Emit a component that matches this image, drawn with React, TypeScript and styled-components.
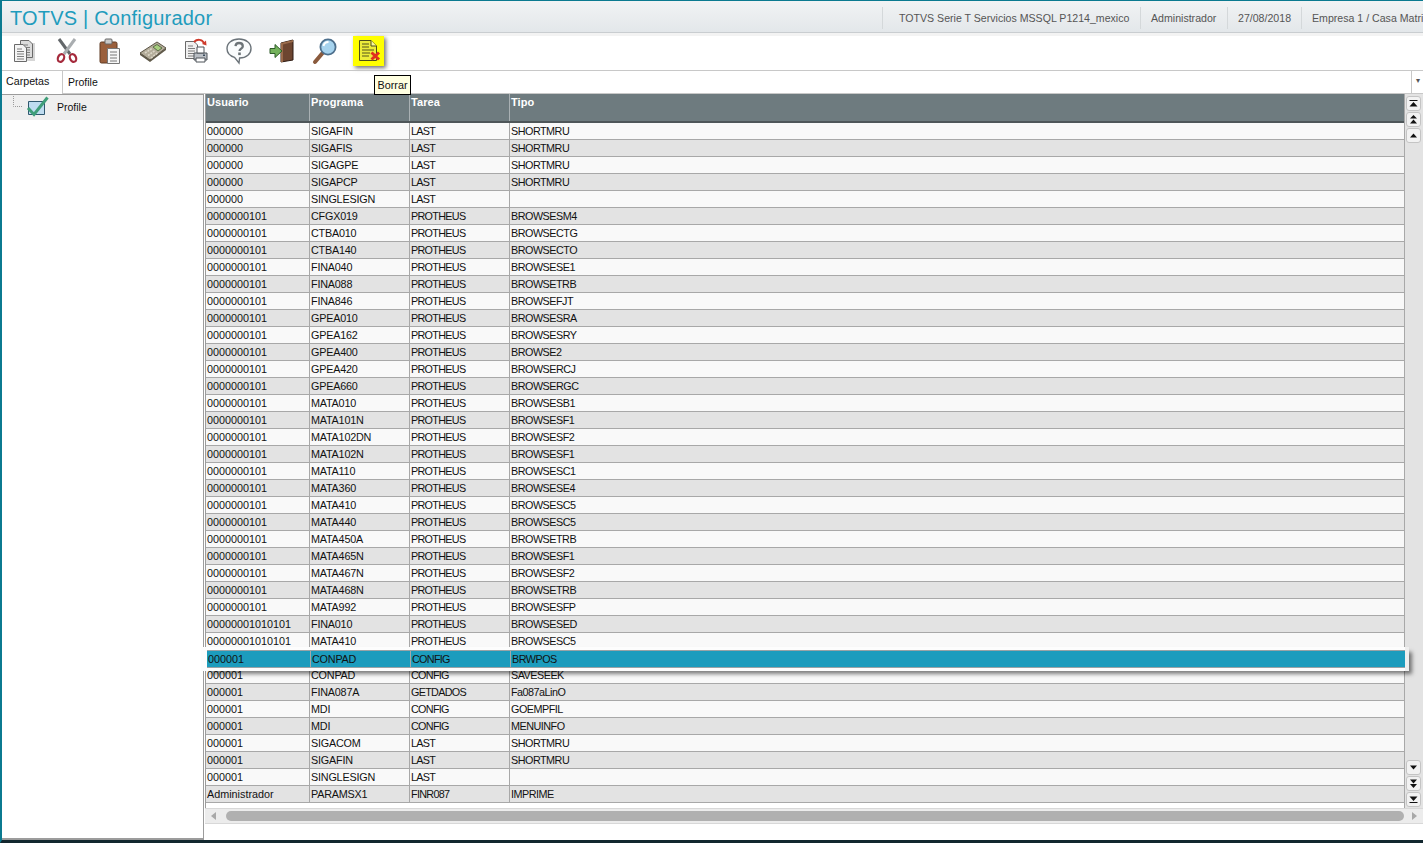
import React from 'react';
import styled, { createGlobalStyle } from 'styled-components';

const GlobalStyle = createGlobalStyle`
  html, body {
    margin: 0;
    padding: 0;
    background: #fff;
    overflow: hidden;
  }
  * {
    box-sizing: border-box;
  }
`;

const Page = styled.div`
  position: relative;
  width: 1423px;
  height: 843px;
  display: flex;
  flex-direction: column;
  overflow: hidden;
  background: #fff;
  border-top: 1px solid #0b7a90;
  border-left: 2px solid #0b7a90;
  border-bottom: 3px solid #12272e;
  font-family: 'Liberation Sans', Arial, sans-serif;
  font-size: 11px;
  color: #111;
`;

const Header = styled.header`
  height: 35px;
  flex: none;
  display: flex;
  align-items: center;
  padding-bottom: 1px;
  background: linear-gradient(#f1f3f4, #e3e7ea 31px, #c9cdd0 31px, #c9cdd0 32px, #f3f3f3 32px);
`;

const Title = styled.h1`
  margin: 0 0 0 8px;
  font-size: 20px;
  font-weight: 400;
  line-height: 32px;
  color: #1f9cbd;
  letter-spacing: 0.2px;
  white-space: nowrap;
`;

const HeaderInfo = styled.div`
  margin-left: auto;
  width: 541px;
  flex: none;
  display: flex;
  height: 22px;
  overflow: hidden;
`;

const InfoItem = styled.div<{ $width: number }>`
  width: ${({ $width }) => $width}px;
  flex: none;
  padding-left: ${({ $width }) => ($width > 200 ? 16 : 10)}px;
  border-left: 1px solid #d4d8da;
  line-height: 23px;
  font-size: 10.6px;
  color: #555;
  white-space: nowrap;
`;

const Toolbar = styled.div`
  height: 34px;
  flex: none;
  padding-left: 7px;
  display: flex;
  gap: 13px;
  background: #fff;
`;

const ToolButton = styled.div<{ $active?: boolean }>`
  width: ${({ $active }) => ($active ? 31 : 30)}px;
  height: 30px;
  flex: none;
  display: flex;
  align-items: center;
  justify-content: center;
  background: ${({ $active }) => ($active ? '#ffff00' : 'transparent')};
  box-shadow: ${({ $active }) => ($active ? '2px 2px 4px rgba(0, 0, 0, 0.55)' : 'none')};
`;

const FolderBar = styled.div`
  height: 24px;
  flex: none;
  display: flex;
  border-top: 1px solid #c8c8c8;
`;

const FolderLabel = styled.div`
  width: 60px;
  flex: none;
  padding-left: 4px;
  line-height: 20px;
  font-size: 10.7px;
`;

const FolderInput = styled.div`
  flex: 1;
  padding-left: 5px;
  line-height: 22px;
  font-size: 10.5px;
  border-left: 1px solid #c8c8c8;
  border-bottom: 1px solid #c8c8c8;
`;

const FolderArrow = styled.div`
  width: 12px;
  flex: none;
  border-left: 1px solid #c8c8c8;
  border-bottom: 1px solid #c8c8c8;
  color: #555;
  font-size: 8px;
  line-height: 20px;
  text-align: center;
`;

const Tooltip = styled.div`
  position: absolute;
  left: 372px;
  top: 74px;
  width: 37px;
  height: 20px;
  background: #ffffe1;
  border: 1px solid #000;
  text-align: center;
  line-height: 18px;
  font-size: 10.8px;
  z-index: 5;
`;

const Main = styled.div`
  flex: 1;
  min-height: 0;
  display: flex;
`;

const Tree = styled.aside`
  width: 202px;
  flex: none;
  border: 1px solid #9c9c9c;
  border-left: none;
  border-bottom: 2px solid #9c9c9c;
`;

const TreeNode = styled.div`
  height: 25px;
  display: flex;
  align-items: center;
  background: #efefef;
  padding: 0 0 1px 11px;
`;

const TreeLabel = styled.span`
  margin-left: 5px;
  font-size: 10.5px;
`;

const GridPanel = styled.section`
  flex: 1;
  min-width: 0;
  display: flex;
  flex-direction: column;
  margin-left: 1px;
`;

const GridArea = styled.div`
  display: flex;
  height: 714px;
  border-left: 1px solid #9c9c9c;
`;

const GridBody = styled.div`
  width: 1198px;
  flex: none;
`;

const HeadRow = styled.div`
  display: grid;
  grid-template-columns: 104px 100px 100px 1fr;
  height: 29px;
  background: #6e7b7f;
  border-bottom: 2px solid #4e5659;
`;

const HeadCell = styled.div`
  padding: 2px 0 0 1px;
  color: #fff;
  font-weight: 700;
  font-size: 11px;
  line-height: 13px;
  letter-spacing: 0.1px;
  border-right: 1px solid #a9b0b3;

  &:last-child {
    border-right: none;
  }
`;

const Row = styled.div<{ $even: boolean }>`
  display: grid;
  grid-template-columns: 104px 100px 100px 1fr;
  height: 17px;
  line-height: 16px;
  background: ${({ $even }) => ($even ? '#f9f9f9' : '#e3e3e3')};
  border-bottom: 1px solid #a8a8a8;
`;

const SelectedRow = styled(Row)`
  position: relative;
  z-index: 3;
  left: 1px;
  height: 18px;
  margin-bottom: -1px;
  background: #1c9cbd;
  border-top: 1px solid #9aa3a6;
  border-bottom: 1px solid #9aa3a6;
  box-shadow:
    -3px 0 0 3px #fdfdfd,
    1px 0 0 3px #eeeeee,
    5px 4px 4px 2px rgba(0, 0, 0, 0.5);
`;

const Cell = styled.div<{ $spacing: number }>`
  padding-left: 1px;
  white-space: nowrap;
  font-size: 10.8px;
  letter-spacing: ${({ $spacing }) => $spacing}px;
  color: #111;
  border-right: 1px solid #a8a8a8;

  &:last-child {
    border-right: none;
  }
`;

const ScrollColumn = styled.div`
  flex: 1;
  display: flex;
  flex-direction: column;
  padding: 2px 0 0 1px;
  background: #e3e3e3;
  border-left: 1px solid #a8a8a8;
`;

const ScrollGap = styled.div`
  flex: 1;
`;

const ScrollButton = styled.div`
  width: 15px;
  height: 15px;
  margin-bottom: 1px;
  background: #f2f2f2;
  border: 1px solid #c4c4c4;
  border-radius: 3px;
  display: flex;
  align-items: center;
  justify-content: center;
`;

const HScroll = styled.div`
  height: 16px;
  display: flex;
  align-items: center;
  background: #ececec;
  border-top: 1px solid #d8d8d8;
  border-bottom: 1px solid #d8d8d8;
  padding: 0 6px;
`;

const HThumb = styled.div`
  flex: 1;
  height: 10px;
  margin: 0 8px 0 10px;
  background: #b0b0b0;
  border-radius: 5px;
`;

const Arrow = styled.div<{ $right?: boolean }>`
  width: 0;
  height: 0;
  border-top: 4px solid transparent;
  border-bottom: 4px solid transparent;
  border-left: ${({ $right }) => ($right ? '5px solid #a8a8a8' : 'none')};
  border-right: ${({ $right }) => ($right ? 'none' : '5px solid #a8a8a8')};
`;

const rows: string[][] = [
  ['000000', 'SIGAFIN', 'LAST', 'SHORTMRU'],
  ['000000', 'SIGAFIS', 'LAST', 'SHORTMRU'],
  ['000000', 'SIGAGPE', 'LAST', 'SHORTMRU'],
  ['000000', 'SIGAPCP', 'LAST', 'SHORTMRU'],
  ['000000', 'SINGLESIGN', 'LAST', ''],
  ['0000000101', 'CFGX019', 'PROTHEUS', 'BROWSESM4'],
  ['0000000101', 'CTBA010', 'PROTHEUS', 'BROWSECTG'],
  ['0000000101', 'CTBA140', 'PROTHEUS', 'BROWSECTO'],
  ['0000000101', 'FINA040', 'PROTHEUS', 'BROWSESE1'],
  ['0000000101', 'FINA088', 'PROTHEUS', 'BROWSETRB'],
  ['0000000101', 'FINA846', 'PROTHEUS', 'BROWSEFJT'],
  ['0000000101', 'GPEA010', 'PROTHEUS', 'BROWSESRA'],
  ['0000000101', 'GPEA162', 'PROTHEUS', 'BROWSESRY'],
  ['0000000101', 'GPEA400', 'PROTHEUS', 'BROWSE2'],
  ['0000000101', 'GPEA420', 'PROTHEUS', 'BROWSERCJ'],
  ['0000000101', 'GPEA660', 'PROTHEUS', 'BROWSERGC'],
  ['0000000101', 'MATA010', 'PROTHEUS', 'BROWSESB1'],
  ['0000000101', 'MATA101N', 'PROTHEUS', 'BROWSESF1'],
  ['0000000101', 'MATA102DN', 'PROTHEUS', 'BROWSESF2'],
  ['0000000101', 'MATA102N', 'PROTHEUS', 'BROWSESF1'],
  ['0000000101', 'MATA110', 'PROTHEUS', 'BROWSESC1'],
  ['0000000101', 'MATA360', 'PROTHEUS', 'BROWSESE4'],
  ['0000000101', 'MATA410', 'PROTHEUS', 'BROWSESC5'],
  ['0000000101', 'MATA440', 'PROTHEUS', 'BROWSESC5'],
  ['0000000101', 'MATA450A', 'PROTHEUS', 'BROWSETRB'],
  ['0000000101', 'MATA465N', 'PROTHEUS', 'BROWSESF1'],
  ['0000000101', 'MATA467N', 'PROTHEUS', 'BROWSESF2'],
  ['0000000101', 'MATA468N', 'PROTHEUS', 'BROWSETRB'],
  ['0000000101', 'MATA992', 'PROTHEUS', 'BROWSESFP'],
  ['00000001010101', 'FINA010', 'PROTHEUS', 'BROWSESED'],
  ['00000001010101', 'MATA410', 'PROTHEUS', 'BROWSESC5'],
  ['000001', 'CONPAD', 'CONFIG', 'BRWPOS'],
  ['000001', 'CONPAD', 'CONFIG', 'SAVESEEK'],
  ['000001', 'FINA087A', 'GETDADOS', 'Fa087aLinO'],
  ['000001', 'MDI', 'CONFIG', 'GOEMPFIL'],
  ['000001', 'MDI', 'CONFIG', 'MENUINFO'],
  ['000001', 'SIGACOM', 'LAST', 'SHORTMRU'],
  ['000001', 'SIGAFIN', 'LAST', 'SHORTMRU'],
  ['000001', 'SINGLESIGN', 'LAST', ''],
  ['Administrador', 'PARAMSX1', 'FINR087', 'IMPRIME'],
];

const SELECTED_ROW = 31;
const COLUMN_SPACING = [0, -0.2, -0.7, -0.5];

const Sheet = ({ x, y, fill = '#f4f4f4' }: { x: number; y: number; fill?: string }) => (
  <g transform={`translate(${x} ${y})`}>
    <path d="M0.5 0.5H9L12.5 4V17.5H0.5Z" fill={fill} stroke="#6a6a6a" />
    <path d="M3 5H8M3 7.5H10M3 10H10M3 12.5H10M3 15H10" stroke="#7d7d7d" />
  </g>
);

const CopyIcon = () => (
  <svg width="26" height="26" viewBox="0 0 26 26">
    <rect x="11" y="5" width="13" height="18" fill="#bbb" opacity="0.6" />
    <Sheet x={9} y={2} fill="#dcdcdc" />
    <Sheet x={3} y={6} />
  </svg>
);

const CutIcon = () => (
  <svg width="24" height="26" viewBox="0 0 24 26">
    <path d="M4 1L15 16" stroke="#63676a" strokeWidth="3" />
    <path d="M20 1L9 16" stroke="#a9adb0" strokeWidth="3" />
    <ellipse cx="6" cy="20" rx="3" ry="4" transform="rotate(25 6 20)" fill="none" stroke="#a52a3c" strokeWidth="2.2" />
    <ellipse cx="18" cy="20" rx="3" ry="4" transform="rotate(-25 18 20)" fill="none" stroke="#a52a3c" strokeWidth="2.2" />
  </svg>
);

const PasteIcon = () => (
  <svg width="26" height="28" viewBox="0 0 26 28">
    <rect x="3" y="5" width="17" height="21" rx="1.5" fill="#9a5f3c" stroke="#5f3a22" />
    <rect x="8" y="2" width="7" height="5" rx="1" fill="#c9c9c9" stroke="#666" />
    <path d="M10.5 11.5H22.5V26.5H10.5Z" fill="#f7f7f7" stroke="#777" />
    <path d="M13 15H20M13 18H20M13 21H20M13 24H20" stroke="#777" />
  </svg>
);

const CalcIcon = () => (
  <svg width="28" height="22" viewBox="0 0 28 22">
    <path d="M1 13L18 2L27 8L11 20Z" fill="#b3ac9a" stroke="#5d5648" />
    <path d="M1 13V15L11 22L27 10V8L11 20Z" fill="#5f5949" />
    <path d="M14 7L18 4.5L23 8L19 11Z" fill="#a7cf7e" stroke="#5d6f48" />
    <path d="M6 13L13 8.5M9 15.5L16 10.5M12 18L19 12.5" stroke="#dcd7c8" strokeWidth="1.6" strokeDasharray="2 1" />
  </svg>
);

const PrintIcon = () => (
  <svg width="26" height="26" viewBox="0 0 26 26">
    <Sheet x={2} y={3} fill="#f0f0f0" />
    <path d="M11 4C14 1 19 1 21 5" fill="none" stroke="#cf3b2c" strokeWidth="2" />
    <path d="M19 6L23 2.5L23.5 7.5Z" fill="#cf3b2c" />
    <path d="M11 15H24V22H11Z" fill="#b9bec4" stroke="#4d5358" />
    <path d="M14 9H21V15H14Z" fill="#fff" stroke="#4d5358" />
    <path d="M13 20H22V24H13Z" fill="#fff" stroke="#4d5358" />
    <rect x="20" y="16.5" width="2" height="1.5" fill="#39495a" />
  </svg>
);

const HelpIcon = () => (
  <svg width="28" height="28" viewBox="0 0 28 28">
    <path
      d="M14 2C7 2 2 6 2 11.5C2 16 5 19 9.5 20.3L14 26L14.6 21C21.5 21 26 17 26 11.5C26 6 21 2 14 2Z"
      fill="#fafcfd"
      stroke="#6b7379"
      strokeWidth="1.4"
    />
    <path
      d="M10.5 9.2C10.7 7 12.2 6 14 6C16.2 6 17.8 7.3 17.8 9.2C17.8 11.6 14.7 11.6 14.5 14"
      fill="none"
      stroke="#6d7478"
      strokeWidth="2.3"
    />
    <rect x="13.2" y="15.5" width="2.6" height="2.6" fill="#6d7478" />
  </svg>
);

const ExitIcon = () => (
  <svg width="26" height="24" viewBox="0 0 26 24">
    <path d="M12 4L24 1V21L12 23Z" fill="#6d4530" stroke="#2d1b12" />
    <path d="M12 4L24 1V3L14 5.5V23H12Z" fill="#9a6a4a" />
    <path d="M1 9.5H6V5.5L13 12L6 18.5V14.5H1Z" fill="#74b25c" stroke="#2f5c2a" />
  </svg>
);

const SearchIcon = () => (
  <svg width="26" height="28" viewBox="0 0 26 28">
    <path d="M3 25L11 15.5" stroke="#8a5a3d" strokeWidth="4" strokeLinecap="round" />
    <circle cx="16" cy="10" r="7.6" fill="#a6d3ee" stroke="#4d6f8c" strokeWidth="1.8" />
    <path d="M11.5 9C12 6.5 14 5 16.5 5" stroke="#fff" strokeWidth="2" fill="none" />
  </svg>
);

const DeleteIcon = () => (
  <svg width="26" height="24" viewBox="0 0 26 24">
    <path d="M3.5 1.5H15L20.5 7V21.5H3.5Z" fill="#ecec3a" stroke="#4d4d18" />
    <path d="M15 1.5V7H20.5" fill="#fbfb9a" stroke="#4d4d18" />
    <path d="M6 5H13M6 8H13M6 11H18M6 14H14M6 17H13" stroke="#55551c" />
    <path d="M15.5 13.5L23 20.5M23 13.5L15.5 20.5" stroke="#e0301e" strokeWidth="3" />
  </svg>
);

const CheckIcon = () => (
  <svg width="39" height="22" viewBox="0 0 39 22">
    <path d="M0.5 0V10.5H10" fill="none" stroke="#9a9a9a" strokeDasharray="1 1" />
    <path d="M15.5 5.5H31.5V18.5H15.5Z" fill="#bfdcf0" stroke="#30586f" />
    <path d="M15 12L21 18.5L34.5 1.5" fill="none" stroke="#3f9e79" strokeWidth="3" />
  </svg>
);

const Glyph = ({ d }: { d: string }) => (
  <svg width="11" height="11" viewBox="0 0 11 11">
    <path d={d} fill="#111" />
  </svg>
);

const GLYPH_TOP = 'M1.5 2H9.5V3H1.5ZM5.5 4L9.5 8.5H1.5Z';
const GLYPH_PAGE_UP = 'M5.5 1L9 4.5H2ZM5.5 5.5L9 9.5H2Z';
const GLYPH_UP = 'M5.5 3.5L9 7.5H2Z';
const GLYPH_DOWN = 'M2 3.5H9L5.5 7.5Z';
const GLYPH_PAGE_DOWN = 'M2 1.5H9L5.5 5.5ZM2 6H9L5.5 10Z';
const GLYPH_BOTTOM = 'M1.5 2.5H9.5L5.5 7ZM1.5 8H9.5V9H1.5Z';

const App: React.FC = () => (
  <Page>
    <GlobalStyle />
    <Header>
      <Title>TOTVS | Configurador</Title>
      <HeaderInfo>
        <InfoItem $width={258}>TOTVS Serie T Servicios MSSQL P1214_mexico</InfoItem>
        <InfoItem $width={87}>Administrador</InfoItem>
        <InfoItem $width={74}>27/08/2018</InfoItem>
        <InfoItem $width={122}>Empresa 1 / Casa Matri</InfoItem>
      </HeaderInfo>
    </Header>
    <Toolbar>
      <ToolButton><CopyIcon /></ToolButton>
      <ToolButton><CutIcon /></ToolButton>
      <ToolButton><PasteIcon /></ToolButton>
      <ToolButton><CalcIcon /></ToolButton>
      <ToolButton><PrintIcon /></ToolButton>
      <ToolButton><HelpIcon /></ToolButton>
      <ToolButton><ExitIcon /></ToolButton>
      <ToolButton><SearchIcon /></ToolButton>
      <ToolButton $active><DeleteIcon /></ToolButton>
    </Toolbar>
    <FolderBar>
      <FolderLabel>Carpetas</FolderLabel>
      <FolderInput>Profile</FolderInput>
      <FolderArrow>▾</FolderArrow>
    </FolderBar>
    <Tooltip>Borrar</Tooltip>
    <Main>
      <Tree>
        <TreeNode>
          <CheckIcon />
          <TreeLabel>Profile</TreeLabel>
        </TreeNode>
      </Tree>
      <GridPanel>
        <GridArea>
          <GridBody>
            <HeadRow>
              <HeadCell>Usuario</HeadCell>
              <HeadCell>Programa</HeadCell>
              <HeadCell>Tarea</HeadCell>
              <HeadCell>Tipo</HeadCell>
            </HeadRow>
            {rows.map((row, index) => {
              const RowKind = index === SELECTED_ROW ? SelectedRow : Row;
              return (
                <RowKind key={index} $even={index % 2 === 0}>
                  {row.map((cell, column) => (
                    <Cell key={column} $spacing={COLUMN_SPACING[column]}>{cell}</Cell>
                  ))}
                </RowKind>
              );
            })}
          </GridBody>
          <ScrollColumn>
            <ScrollButton><Glyph d={GLYPH_TOP} /></ScrollButton>
            <ScrollButton><Glyph d={GLYPH_PAGE_UP} /></ScrollButton>
            <ScrollButton><Glyph d={GLYPH_UP} /></ScrollButton>
            <ScrollGap />
            <ScrollButton><Glyph d={GLYPH_DOWN} /></ScrollButton>
            <ScrollButton><Glyph d={GLYPH_PAGE_DOWN} /></ScrollButton>
            <ScrollButton><Glyph d={GLYPH_BOTTOM} /></ScrollButton>
          </ScrollColumn>
        </GridArea>
        <HScroll>
          <Arrow />
          <HThumb />
          <Arrow $right />
        </HScroll>
      </GridPanel>
    </Main>
  </Page>
);

export default App;
